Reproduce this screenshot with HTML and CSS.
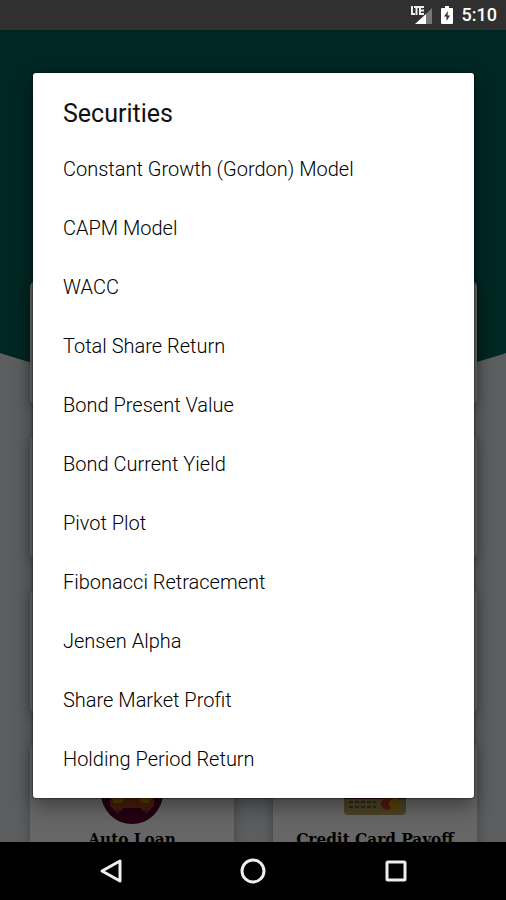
FILE: index.html
```
<!DOCTYPE html>
<html lang="en">
<head>
  <meta charset="UTF-8" />
  <meta name="viewport" content="width=device-width, initial-scale=1" />
  <title>Securities</title>
  <link rel="stylesheet" href="styles.css">
</head>
<body>

  <header class="status-bar">
    <svg class="signal" width="24" height="20" viewBox="0 0 24 20" aria-label="LTE signal">
      <path d="M23 3v16h-6V9z" fill="#777" />
      <path d="M17 9v10H6z" fill="#fff" />
      <path d="M3 1v8h3M5 2h5M7.500 2v8M15 2h-3v7h3" fill="none" stroke="#303030" stroke-width="4" />
      <path d="M3 1v8h3M5 2h5M7.500 2v8M15 2h-4v7h4M11 5.500h4" fill="none" stroke="#eee" stroke-width="2" />
    </svg>
    <svg class="battery" width="12" height="18" viewBox="0 0 12 18" aria-label="Battery charging">
      <path d="M4 0h4v2h3q1 0 1 1v14q0 1-1 1H1q-1 0-1-1V3q0-1 1-1h3z" fill="#fff" />
      <path d="M7 5L3 10.500h2.500V15L9 9.500H6.500z" fill="#303030" />
    </svg>
    <span class="clock">5:10</span>
  </header>

  <main class="app">
    <div class="hero"></div>
    <div class="card-grid">
      <div class="card"></div>
      <div class="card"></div>
      <div class="card"></div>
      <div class="card"></div>
      <div class="card"></div>
      <div class="card"></div>
      <div class="card">
        <svg width="62" height="62" viewBox="0 0 62 62">
          <circle cx="31" cy="31" r="31" fill="#58002c" />
          <path d="M9 30h44v14l-5 5H14l-5-5z" fill="#b8441c" />
          <path d="M11 36h13l-3 5h-8zM38 36h13l-4 5h-7z" fill="#c69a10" />
          <path d="M19 51l3-5h18l3 5z" fill="#58002c" />
          <path d="M13 48h7l-3 4zM42 48h7l-4 4z" fill="#56435c" />
        </svg>
        <h3>Auto Loan</h3>
      </div>
      <div class="card">
        <svg class="credit" width="62" height="46" viewBox="0 0 62 46">
          <rect width="62" height="46" rx="4" fill="#b9a560" />
          <path d="M0 18h62v12H0z" fill="#641722" />
          <path d="M5 33h27M5 38h27" stroke="#796438" stroke-width="2" stroke-dasharray="4 2" />
          <circle cx="43" cy="35" r="6" fill="#d33e28" />
          <circle cx="51" cy="35" r="6" fill="#d8a80c" />
        </svg>
        <h3>Credit Card Payoff</h3>
      </div>
    </div>

    <div class="overlay">
      <section class="dialog" role="dialog" aria-labelledby="dialogTitle">
        <h2 id="dialogTitle">Securities</h2>
        <ul>
          <li><button type="button">Constant Growth (Gordon) Model</button></li>
          <li><button type="button">CAPM Model</button></li>
          <li><button type="button">WACC</button></li>
          <li><button type="button">Total Share Return</button></li>
          <li><button type="button">Bond Present Value</button></li>
          <li><button type="button">Bond Current Yield</button></li>
          <li><button type="button">Pivot Plot</button></li>
          <li><button type="button">Fibonacci Retracement</button></li>
          <li><button type="button">Jensen Alpha</button></li>
          <li><button type="button">Share Market Profit</button></li>
          <li><button type="button">Holding Period Return</button></li>
        </ul>
      </section>
    </div>
  </main>

  <nav class="nav-bar">
    <button type="button" aria-label="Back">
      <svg width="26" height="26" viewBox="0 0 26 26">
        <path d="M22 3v20L4 13z" />
      </svg>
    </button>
    <button type="button" aria-label="Home">
      <svg width="26" height="26" viewBox="0 0 26 26">
        <circle cx="13" cy="13" r="11" />
      </svg>
    </button>
    <button type="button" aria-label="Recent apps">
      <svg width="26" height="26" viewBox="0 0 26 26">
        <rect x="5" y="4" width="18" height="18" rx="1" />
      </svg>
    </button>
  </nav>

</body>
</html>
```
FILE: styles.css
```
* {
  box-sizing: border-box;
}

body {
  margin: 0;
  height: 100vh;
  display: flex;
  flex-direction: column;
  font-family: Roboto, "Liberation Sans", sans-serif;
  background: #000;
  overflow: hidden;
}

h2,
h3,
ul {
  margin: 0;
  padding: 0;
}

button {
  border: none;
  background: none;
  font-family: inherit;
  cursor: pointer;
}

/* status bar */
.status-bar {
  height: 30px;
  display: flex;
  align-items: center;
  justify-content: flex-end;
  padding: 0 9px;
  background: #303030;
  color: #fff;
}

.battery {
  margin: 0 9px 0 8px;
}

.clock {
  font-size: 18px;
  font-weight: 500;
  line-height: 32px;
}

/* app behind the dialog */
.app {
  position: relative;
  flex: 1;
  min-height: 0;
  overflow: hidden;
  background: #e4e8ee;
}

.hero {
  position: absolute;
  inset: 0;
  background: #006257;
  clip-path: circle(800px at 50% -436px);
}

.card-grid {
  position: relative;
  display: grid;
  grid-template-columns: 1fr 1fr;
  grid-auto-rows: 124px;
  gap: 30px 39px;
  padding: 251px 29px 0 30px;
}

.card {
  display: flex;
  flex-direction: column;
  align-items: center;
  justify-content: flex-end;
  padding-bottom: 16px;
  border-radius: 6px;
  background: #fff;
  box-shadow: 0 3px 12px rgba(0, 0, 0, 0.3);
}

.card h3 {
  font-family: "DejaVu Serif Condensed", "DejaVu Serif", serif;
  font-size: 17px;
  line-height: 24px;
  white-space: nowrap;
}

.card svg {
  margin-bottom: 3px;
}

.card .credit {
  margin-bottom: 12px;
}

/* dialog */
.overlay {
  position: absolute;
  inset: 0;
  display: flex;
  align-items: center;
  justify-content: center;
  padding: 0 32px 2px 33px;
  background: rgba(0, 0, 0, 0.6);
}

.dialog {
  width: 100%;
  padding: 14px 0 9px;
  background: #fff;
  border-radius: 3px;
  box-shadow: 0 0 2px #000, 0 8px 20px rgba(0, 0, 0, 0.4);
}

.dialog h2 {
  padding: 11px 30px 10px;
  font-size: 25px;
  font-weight: 400;
  line-height: 32px;
  color: #111;
}

.dialog ul {
  list-style: none;
}

.dialog li button {
  display: block;
  width: 100%;
  padding: 0 30px;
  font-size: 20px;
  font-weight: 300;
  line-height: 59px;
  text-align: left;
  color: #000;
}

/* navigation bar */
.nav-bar {
  height: 58px;
  display: flex;
  align-items: center;
  justify-content: center;
  background: #000;
}

.nav-bar button {
  width: 28%;
  height: 58px;
  padding: 0;
}

.nav-bar svg {
  display: block;
  margin: 0 auto;
  fill: none;
  stroke: #eee;
  stroke-width: 3;
  stroke-linejoin: round;
}
```
